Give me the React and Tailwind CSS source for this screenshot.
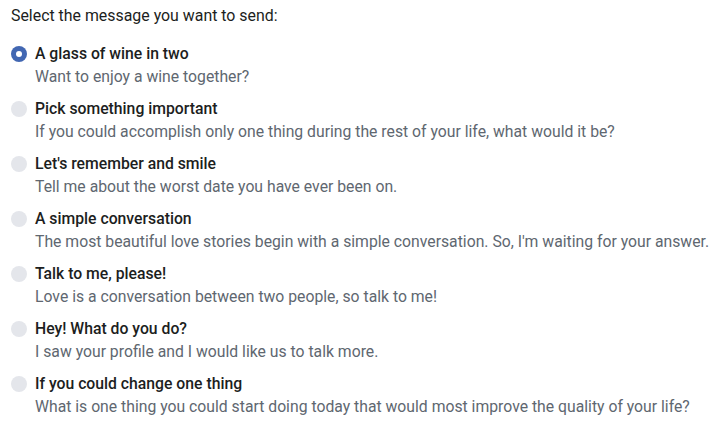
import React from "react";

const OPTIONS = [
  {
    title: "A glass of wine in two",
    text: "Want to enjoy a wine together?",
  },
  {
    title: "Pick something important",
    text: "If you could accomplish only one thing during the rest of your life, what would it be?",
  },
  {
    title: "Let's remember and smile",
    text: "Tell me about the worst date you have ever been on.",
  },
  {
    title: "A simple conversation",
    text: "The most beautiful love stories begin with a simple conversation. So, I'm waiting for your answer.",
  },
  {
    title: "Talk to me, please!",
    text: "Love is a conversation between two people, so talk to me!",
  },
  {
    title: "Hey! What do you do?",
    text: "I saw your profile and I would like us to talk more.",
  },
  {
    title: "If you could change one thing",
    text: "What is one thing you could start doing today that would most improve the quality of your life?",
  },
];

export default function App() {
  const [selected, setSelected] = React.useState(0);

  return (
    <div className="w-[720px] h-[423px] bg-white pl-[11px] pt-[6px] font-['Roboto',sans-serif] overflow-hidden">
      <p className="text-[15.9px] leading-[20px] text-[#1c1e21]">
        Select the message you want to send:
      </p>

      <div className="mt-[18px] flex flex-col gap-[12px]">
        {OPTIONS.map((o, i) => (
          <label
            key={i}
            className="flex items-start gap-[8px] cursor-pointer"
            onClick={() => setSelected(i)}
          >
            {/* radio dot */}
            <span
              className={`mt-[2px] w-[16px] h-[16px] rounded-full shrink-0 flex items-center justify-center ${
                selected === i ? "bg-[#4267b2]" : "bg-[#e4e6eb]"
              }`}
            >
              {selected === i && (
                <span className="w-[6px] h-[6px] rounded-full bg-white" />
              )}
            </span>
            <span className="flex flex-col">
              <span className="text-[15.75px] leading-[20px] font-medium text-[#1c1e21]">
                {o.title}
              </span>
              <span className="mt-[3px] text-[15.75px] leading-[20px] text-[#606770]">
                {o.text}
              </span>
            </span>
          </label>
        ))}
      </div>
    </div>
  );
}
